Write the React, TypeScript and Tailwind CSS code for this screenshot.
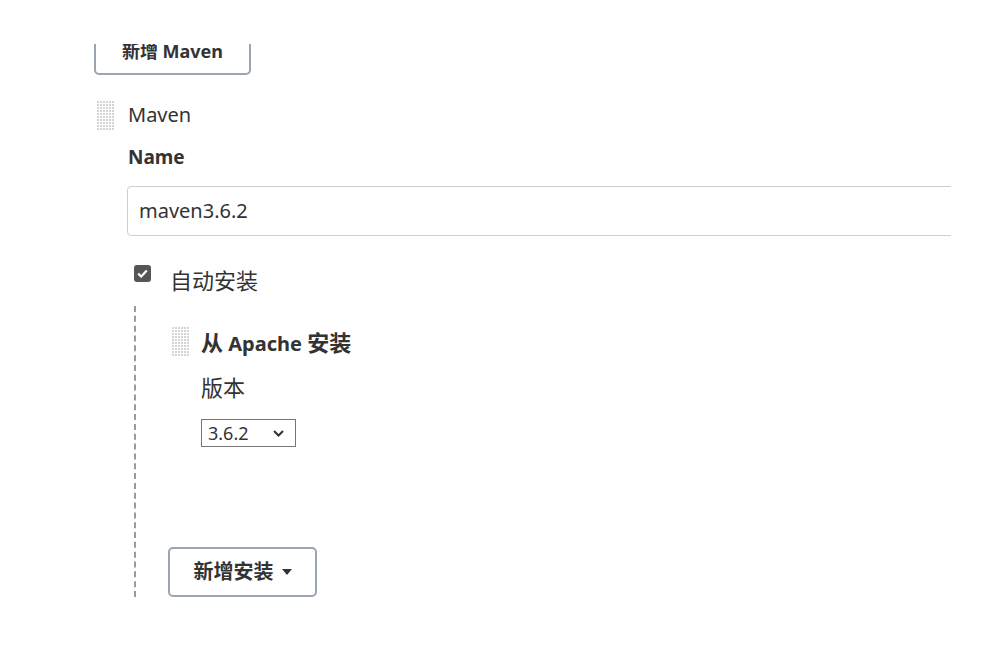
import React from "react";

const Grip = ({ id }: { id: string }) => (
  <svg width="18" height="30" viewBox="0 0 18 30" className="shrink-0 block">
    <defs>
      <pattern id={id} width="3" height="3" patternUnits="userSpaceOnUse">
        <rect width="2" height="2" fill="#d4d4d4" />
      </pattern>
    </defs>
    <rect width="18" height="30" fill={`url(#${id})`} />
  </svg>
);

export default function App() {
  return (
    <div className="w-[984px] h-[661px] overflow-hidden bg-white text-[#333] font-['Noto_Sans','Noto_Sans_CJK_SC',sans-serif]">
      <div className="mt-[44px] ml-[94px] h-[31px] overflow-hidden flex flex-col justify-end">
        <button className="w-[157px] h-[50px] shrink-0 border-2 border-[#9aa5b1] rounded-[5px] bg-white font-bold text-[18px] leading-none text-[#333] pt-[2px]">
          新增 Maven
        </button>
      </div>
      <div className="mt-[25px] ml-[97px] flex">
        <div className="mt-[1px]">
          <Grip id="g1" />
        </div>
        <div className="ml-[13px]">
          <div className="text-[20px] leading-[30px]">Maven</div>
          <div className="mt-[14px] font-bold text-[19px] leading-[26px]">Name</div>
          <div className="mt-[16px] -ml-px w-[824px] overflow-hidden">
            <div className="w-[880px] h-[50px] border border-[#cfcfcf] rounded-[4px] pl-[11px] flex items-center text-[20px]">
              maven3.6.2
            </div>
          </div>
          <div className="mt-[23px] ml-[6px] flex items-start">
            <div className="mt-[6px] w-[17px] h-[17px] rounded-[3px] bg-[#555] flex items-center justify-center">
              <svg width="11" height="9" viewBox="0 0 11 9">
                <path d="M1.2 4.6 L4.2 7.5 L9.8 1.4" fill="none" stroke="#fff" strokeWidth="2.2" />
              </svg>
            </div>
            <span className="mt-[6px] ml-[19px] text-[22px] leading-[30px]">自动安装</span>
          </div>
          <div className="mt-[11px] ml-[6px] border-l-2 border-dashed border-[#9a9a9a] pt-[21px]">
            <div className="pl-[36px] flex">
              <Grip id="g2" />
              <div className="ml-[11px]">
                <div className="font-bold text-[20px] leading-[30px]">
                  <span className="text-[22px]">从</span> Apache <span className="text-[22px]">安装</span>
                </div>
                <div className="mt-[13px] text-[22px] leading-[30px]">版本</div>
                <div className="mt-[17px] w-[95px] h-[28px] border border-[#767676] flex items-center pl-[6px] text-[18px] leading-none">
                  <span>3.6.2</span>
                  <svg width="11" height="7" viewBox="0 0 11 7" className="ml-auto mr-[11px]">
                    <path d="M1 1 L5.5 5.5 L10 1" fill="none" stroke="#333" strokeWidth="2" />
                  </svg>
                </div>
              </div>
            </div>
            <div className="mt-[100px] ml-[32px]">
              <button className="w-[149px] h-[50px] border-2 border-[#9aa5b1] rounded-[5px] bg-white font-bold text-[20px] leading-none text-[#333] flex items-center justify-center">
                <span>新增安装</span>
                <svg width="10" height="6" viewBox="0 0 10 6" className="ml-[8px]">
                  <path d="M0 0 L10 0 L5 6 Z" fill="#333" />
                </svg>
              </button>
            </div>
          </div>
        </div>
      </div>
    </div>
  );
}
